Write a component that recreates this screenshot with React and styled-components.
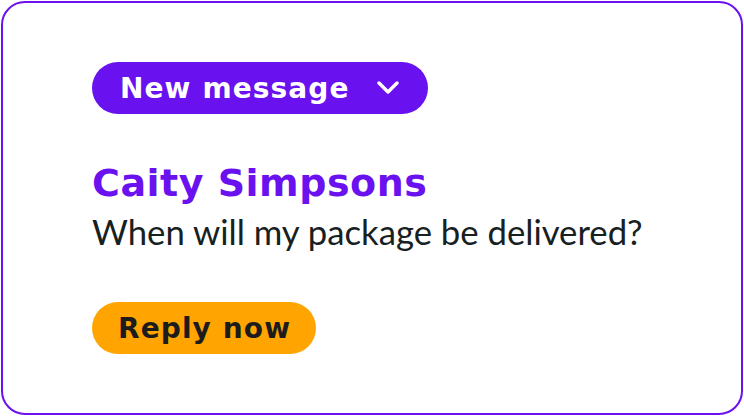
import React from 'react'
import styled, { createGlobalStyle } from 'styled-components'

const Global = createGlobalStyle`
    html, body {
        margin: 0;
        padding: 0;
        background: #ffffff;
    }
    body {
        padding: 1px;
        box-sizing: border-box;
        width: 744px;
        height: 417px;
    }
`

const Card = styled.div`
    box-sizing: border-box;
    width: 742px;
    height: 414px;
    border: 2px solid #6a11f0;
    border-radius: 24px;
    background: #ffffff;
    padding: 59px 0 0 89px;
    display: flex;
    flex-direction: column;
    align-items: flex-start;
`

const Pill = styled.button`
    display: inline-flex;
    align-items: center;
    height: 52px;
    box-sizing: border-box;
    border: none;
    border-radius: 26px;
    padding: 0 ${p => p.$right}px 0 ${p => p.$left}px;
    background: ${p => p.$bg};
    color: ${p => p.$fg};
    font-family: "DejaVu Sans", sans-serif;
    font-weight: 700;
    font-size: 28px;
    letter-spacing: 1.1px;
    cursor: pointer;
`

const Chevron = styled.svg`
    width: 22px;
    height: 14px;
    margin-left: 27px;
`

const Name = styled.h2`
    margin: 47px 0 0 0;
    font-family: "DejaVu Sans", sans-serif;
    font-weight: 700;
    font-size: 38px;
    letter-spacing: 0.5px;
    color: #6a11f0;
    line-height: 44px;
`

const Body = styled.p`
    margin: 5px 0 0 0;
    font-family: Lato, sans-serif;
    font-weight: 400;
    font-size: 34.7px;
    line-height: 44px;
    color: #17211f;
`

const Actions = styled.div`
    margin-top: 48px;
`

const App = () => {
    return (
        <>
            <Global />
            <Card>
                <Pill $bg="#6a11f0" $fg="#ffffff" $left={28} $right={29}>
                    New message
                    <Chevron viewBox="0 0 22 14">
                        <polyline points="2,2 11,11 20,2" fill="none" stroke="#ffffff" strokeWidth="3.4" strokeLinecap="round" strokeLinejoin="round" />
                    </Chevron>
                </Pill>
                <Name>Caity Simpsons</Name>
                <Body>When will my package be delivered?</Body>
                <Actions>
                    <Pill $bg="#ffa400" $fg="#1c1c1c" $left={26} $right={25}>Reply now</Pill>
                </Actions>
            </Card>
        </>
    )
}

export default App
